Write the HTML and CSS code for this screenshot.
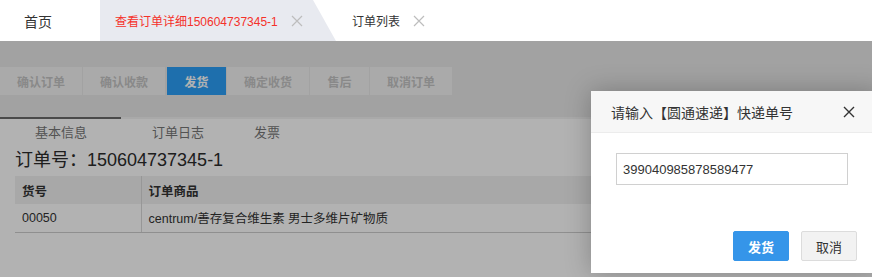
FILE: index.html
```html
<!DOCTYPE html>
<html lang="zh-CN">
  <head>
    <meta charset="UTF-8" />
    <title>订单详细</title>
    <link rel="stylesheet" href="styles.css">
  </head>
  <body>
    <div class="tabbar">
      <div class="tab tab-home">首页</div>
      <div class="tab tab-active">
        <span>查看订单详细150604737345-1</span>
        <svg class="tab-close" viewBox="0 0 12 12"><path d="M1 1L11 11M11 1L1 11" /></svg>
      </div>
      <div class="tab tab-plain">
        <span>订单列表</span>
        <svg class="tab-close" viewBox="0 0 12 12"><path d="M1 1L11 11M11 1L1 11" /></svg>
      </div>
    </div>

    <div class="page">
      <div class="actions">
        <button class="act act-w4">确认订单</button>
        <button class="act act-w4">确认收款</button>
        <button class="act act-w2 act-primary">发货</button>
        <button class="act act-w4">确定收货</button>
        <button class="act act-w2">售后</button>
        <button class="act act-w4">取消订单</button>
      </div>

      <div class="detail">
        <div class="subtabs">
          <div class="subtab subtab-on">基本信息</div>
          <div class="subtab subtab-log">订单日志</div>
          <div class="subtab subtab-bill">发票</div>
        </div>
        <h1 class="order-no">订单号：150604737345-1</h1>
        <table class="goods">
          <tr class="goods-head">
            <th class="col-sku">货号</th>
            <th>订单商品</th>
          </tr>
          <tr>
            <td class="col-sku">00050</td>
            <td>centrum/善存复合维生素 男士多维片矿物质</td>
          </tr>
        </table>
      </div>
    </div>

    <div class="mask"></div>

    <div class="dialog">
      <div class="dialog-head">
        <span>请输入【圆通速递】快递单号</span>
        <svg class="dialog-close" viewBox="0 0 12 12"><path d="M1 1L11 11M11 1L1 11" /></svg>
      </div>
      <div class="dialog-body">
        <input class="track-input" type="text" value="399040985878589477" />
      </div>
      <div class="dialog-foot">
        <button class="btn btn-primary">发货</button>
        <button class="btn">取消</button>
      </div>
    </div>
  </body>
</html>
```

FILE: styles.css
```css
* {
  box-sizing: border-box;
}

body {
  margin: 0;
  font-family: "Liberation Sans", "Noto Sans CJK SC", sans-serif;
  background: #fff;
  width: 872px;
  height: 277px;
  overflow: hidden;
  position: relative;
}

.tabbar {
  display: flex;
  height: 41px;
  background: #fff;
}

.tab {
  display: flex;
  align-items: center;
  height: 41px;
  font-size: 12px;
  color: #333;
}

.tab-home {
  width: 100px;
  padding-left: 24px;
  font-size: 14px;
}

.tab-active {
  width: 236px;
  padding-left: 15px;
  color: #f5312a;
  background: #e8eaf0;
  clip-path: polygon(0 0, 213px 0, 236px 100%, 0 100%);
}

.tab-plain {
  padding-left: 16px;
}

.tab-close {
  width: 12px;
  height: 12px;
  margin-left: 13px;
  stroke: #bdbdbd;
  stroke-width: 1.2;
  fill: none;
}

.page {
  background: #e9e9e9;
  height: 236px;
  padding-top: 26px;
}

.actions {
  display: flex;
  gap: 1px;
  height: 28px;
}

.act {
  border: 0;
  margin: 0;
  height: 28px;
  padding: 0;
  background: #f4f4f4;
  color: #c4c4c4;
  font-family: inherit;
  font-size: 12px;
  font-weight: bold;
}

.act-w4 {
  width: 82px;
}

.act-w2 {
  width: 59px;
}

.act-primary {
  margin-left: 1px;
  background: #2c9ff8;
  color: #fff;
}

.detail {
  margin-top: 22px;
  background: #fff;
  height: 160px;
}

.subtabs {
  display: flex;
  height: 30px;
  border-top: 2px solid #6a6a6a;
  border-image: linear-gradient(to right, #6a6a6a 122px, #f2f2f2 122px) 1;
}

.subtab {
  font-size: 13px;
  color: #777;
  line-height: 28px;
}

.subtab-on {
  width: 122px;
  text-align: center;
}

.subtab-log {
  margin-left: 30px;
}

.subtab-bill {
  margin-left: 50px;
}

.order-no {
  margin: 0 0 0 15px;
  height: 29px;
  font-size: 18px;
  font-weight: normal;
  color: #2b2b2b;
  line-height: 26px;
}

.goods {
  margin-left: 15px;
  width: 857px;
  border-collapse: collapse;
  font-size: 12.5px;
  color: #333;
}

.goods th,
.goods td {
  height: 28px;
  padding: 0 7px;
  text-align: left;
}

.goods-head {
  background: #f1f1f1;
}

.goods th {
  font-weight: bold;
}

.goods tr:last-child td {
  border-bottom: 1px solid #cdcdcd;
}

.col-sku {
  width: 126px;
  border-right: 1px solid #d8d8d8;
}

.mask {
  position: absolute;
  left: 0;
  top: 41px;
  right: 0;
  bottom: 0;
  background: rgba(0, 0, 0, 0.3);
}

.dialog {
  position: absolute;
  left: 591px;
  top: 91px;
  width: 290px;
  height: 182px;
  background: #fff;
  box-shadow: 0 0 24px rgba(0, 0, 0, 0.25);
}

.dialog-head {
  display: flex;
  align-items: center;
  justify-content: space-between;
  height: 42px;
  padding: 0 26px 0 20px;
  background: #f7f7f7;
  border-bottom: 1px solid #ececec;
  font-size: 14px;
  color: #333;
}

.dialog-close {
  width: 12px;
  height: 12px;
  stroke: #333;
  stroke-width: 1.4;
  fill: none;
}

.dialog-body {
  padding: 20px 0 0 25px;
}

.track-input {
  width: 232px;
  height: 32px;
  padding: 0 6px;
  border: 1px solid #d0d0d0;
  font-family: inherit;
  font-size: 13px;
  color: #333;
  outline: none;
}

.dialog-foot {
  display: flex;
  gap: 12px;
  padding: 46px 0 0 142px;
}

.btn {
  width: 56px;
  height: 30px;
  border: 1px solid #dcdcdc;
  border-radius: 2px;
  background: #f2f2f2;
  color: #333;
  font-family: inherit;
  font-size: 13px;
}

.btn-primary {
  border-color: #3595e9;
  background: #3595e9;
  color: #fff;
  font-weight: bold;
}
```
